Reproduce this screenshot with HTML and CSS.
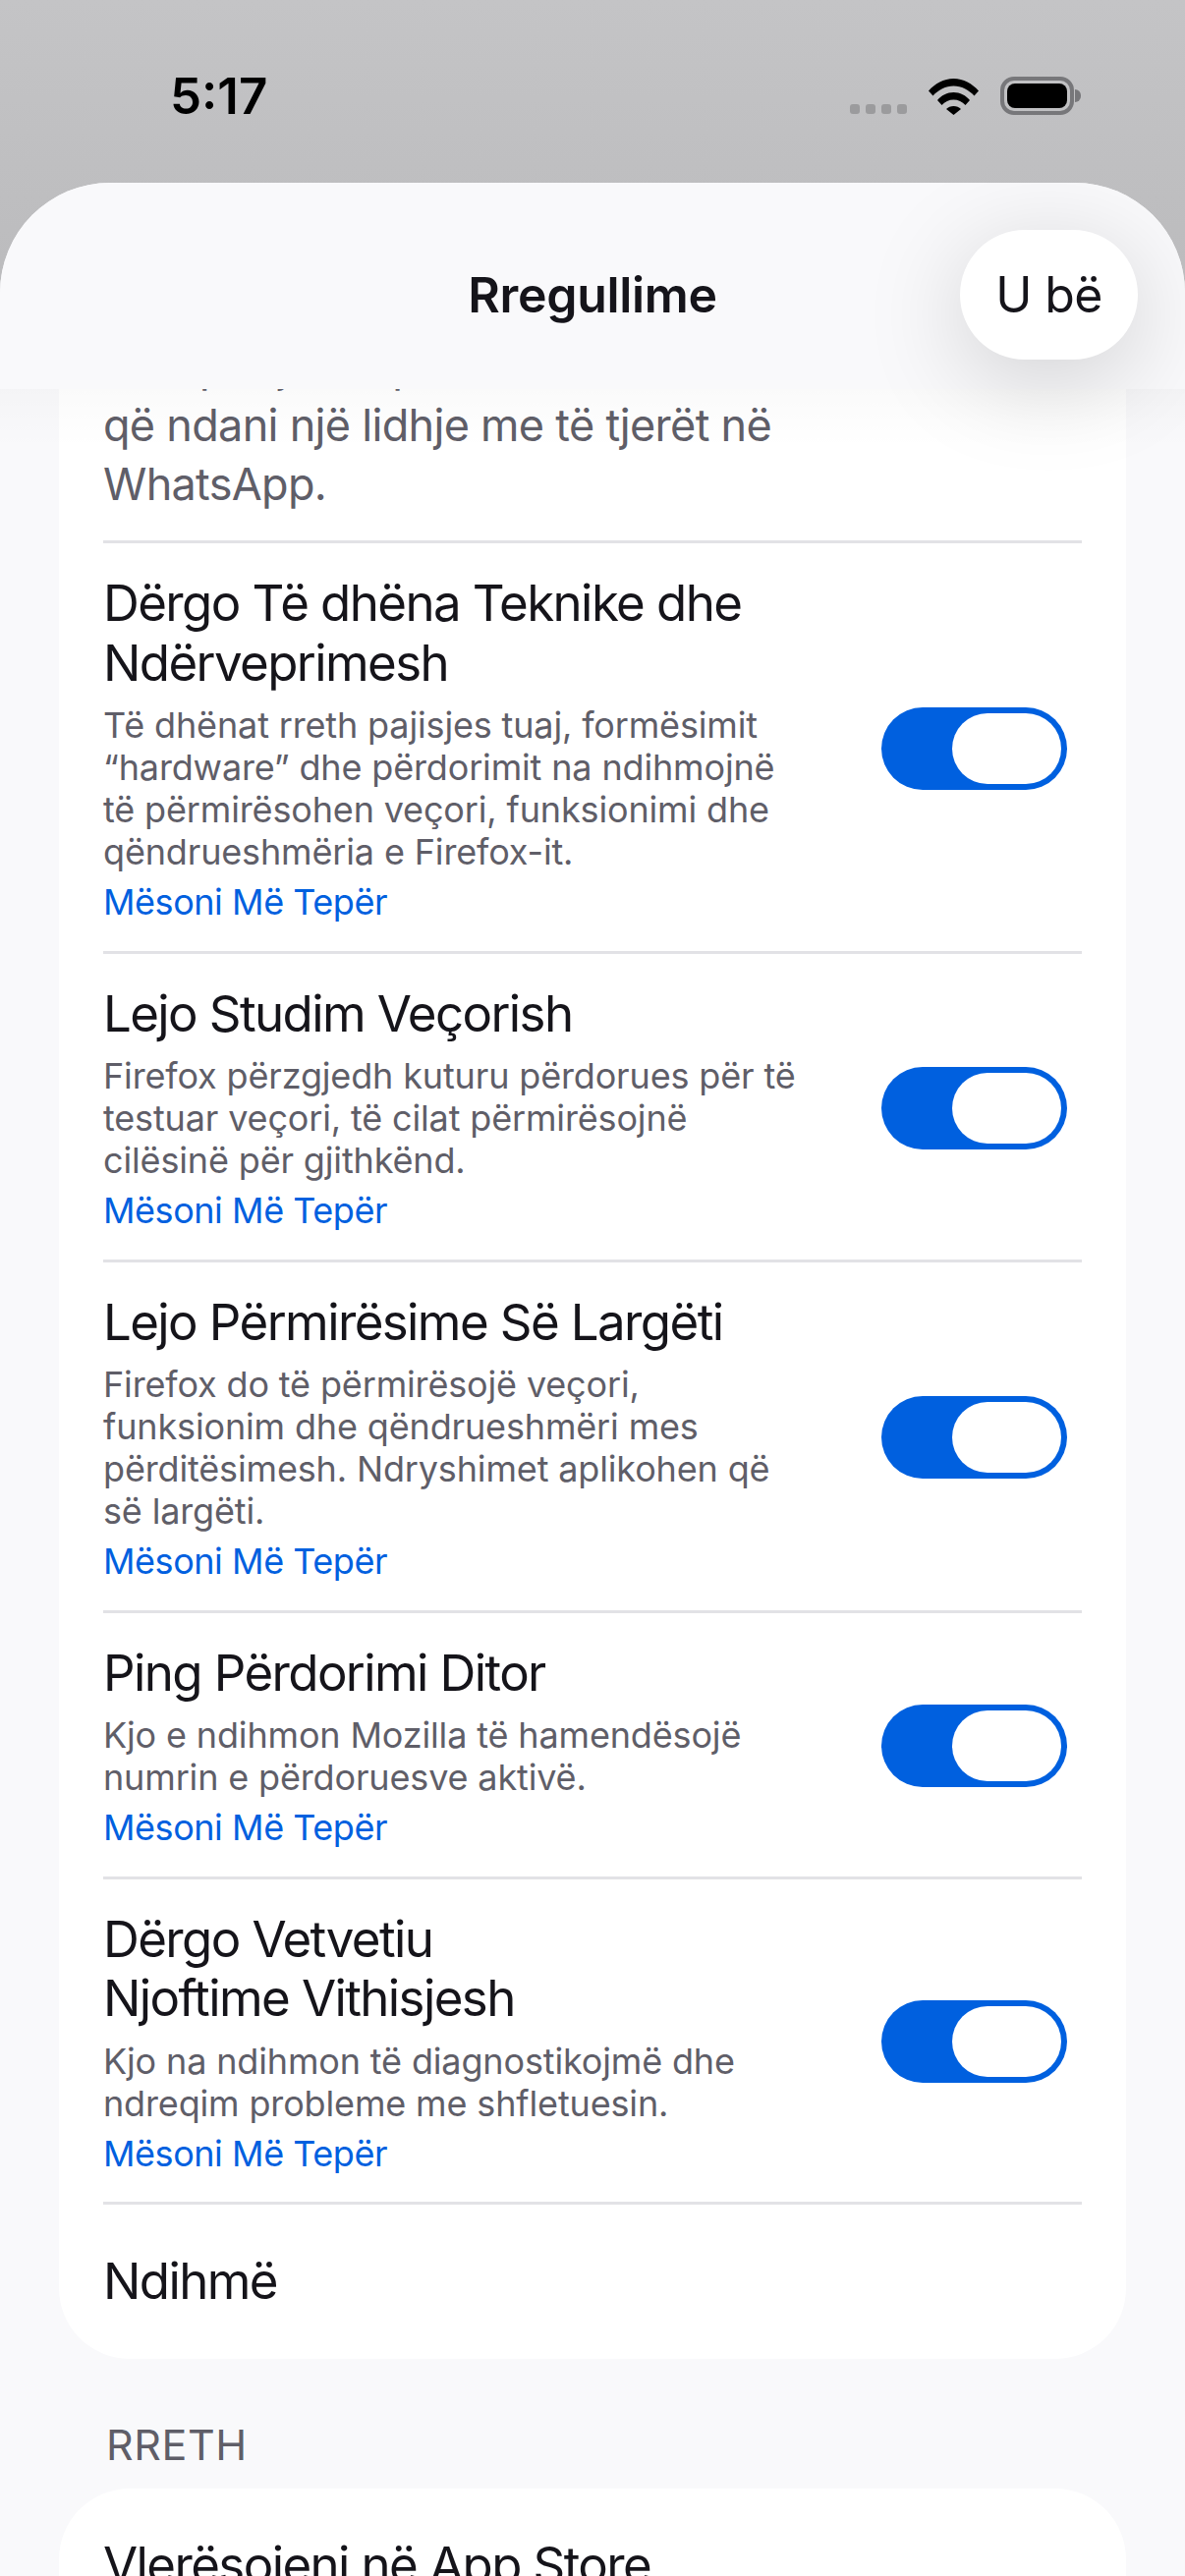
FILE: index.html
```html
<!DOCTYPE html>
<html lang="en">
<head>
    <meta charset="UTF-8">
    <meta name="viewport" content="width=device-width, initial-scale=1.0">
    <title>Rregullime</title>
    <link rel="stylesheet" href="styles.css">
</head>
<body>
    <div class="status-bar">
        <span class="time">5:17</span>
        <div class="status-icons">
            <div class="signal"><i></i><i></i><i></i><i></i></div>
            <svg class="wifi" width="51" height="37" viewBox="0 0 51 37">
                <path d="M0 12.5C6.500 5 15.500 0 25.500 0S44.500 5 51 12.500L46.500 17.500C41 11.500 33.500 7.500 25.500 7.500S10 11.500 4.500 17.500Z"/>
                <path d="M9 22C13 17 19 14 25.500 14S38 17 42 22L37.500 27C34.500 23.500 30 21.500 25.500 21.500S16.500 23.500 13.500 27Z"/>
                <path d="M18 31C20 29 22.500 28 25.500 28S31 29 33 31L25.500 37Z"/>
            </svg>
            <div class="battery"><div class="battery-fill"></div></div>
        </div>
    </div>
    <div class="sheet">
        <header class="sheet-header">
            <h1>Rregullime</h1>
            <button class="done-btn">U bë</button>
        </header>
        <div class="header-fade"></div>
        <div class="scroll-area">
            <div class="card first-card">
                <div class="row intro-row">
                    <p class="intro-text">Tani për ju të qartë<br>që ndani një lidhje me të tjerët në<br>WhatsApp.</p>
                </div>
                <div class="row">
                    <div class="row-text">
                        <div class="row-title">Dërgo Të dhëna Teknike dhe<br>Ndërveprimesh</div>
                        <p class="row-desc">Të dhënat rreth pajisjes tuaj, formësimit<br>“hardware” dhe përdorimit na ndihmojnë<br>të përmirësohen veçori, funksionimi dhe<br>qëndrueshmëria e Firefox-it.</p>
                        <a class="row-link">Mësoni Më Tepër</a>
                    </div>
                    <div class="toggle"><div class="knob"></div></div>
                </div>
                <div class="row">
                    <div class="row-text">
                        <div class="row-title">Lejo Studim Veçorish</div>
                        <p class="row-desc">Firefox përzgjedh kuturu përdorues për të<br>testuar veçori, të cilat përmirësojnë<br>cilësinë për gjithkënd.</p>
                        <a class="row-link">Mësoni Më Tepër</a>
                    </div>
                    <div class="toggle"><div class="knob"></div></div>
                </div>
                <div class="row">
                    <div class="row-text">
                        <div class="row-title">Lejo Përmirësime Së Largëti</div>
                        <p class="row-desc">Firefox do të përmirësojë veçori,<br>funksionim dhe qëndrueshmëri mes<br>përditësimesh. Ndryshimet aplikohen që<br>së largëti.</p>
                        <a class="row-link">Mësoni Më Tepër</a>
                    </div>
                    <div class="toggle"><div class="knob"></div></div>
                </div>
                <div class="row">
                    <div class="row-text">
                        <div class="row-title">Ping Përdorimi Ditor</div>
                        <p class="row-desc">Kjo e ndihmon Mozilla të hamendësojë<br>numrin e përdoruesve aktivë.</p>
                        <a class="row-link">Mësoni Më Tepër</a>
                    </div>
                    <div class="toggle"><div class="knob"></div></div>
                </div>
                <div class="row">
                    <div class="row-text">
                        <div class="row-title">Dërgo Vetvetiu<br>Njoftime Vithisjesh</div>
                        <p class="row-desc">Kjo na ndihmon të diagnostikojmë dhe<br>ndreqim probleme me shfletuesin.</p>
                        <a class="row-link">Mësoni Më Tepër</a>
                    </div>
                    <div class="toggle"><div class="knob"></div></div>
                </div>
                <div class="row plain-row">
                    <div class="row-title">Ndihmë</div>
                </div>
            </div>
            <div class="section-label">RRETH</div>
            <div class="card">
                <div class="row plain-row">
                    <div class="row-title">Vlerësojeni në App Store</div>
                </div>
            </div>
        </div>
    </div>
</body>
</html>
```

FILE: styles.css
```css
* {
    box-sizing: border-box;
}
html, body {
    margin: 0;
    padding: 0;
    height: 2622px;
    overflow: hidden;
}
body {
    font-family: Inter, "Liberation Sans", sans-serif;
    background: linear-gradient(#c4c4c6, #bbbbbd 300px);
    color: #15141a;
    display: flex;
    flex-direction: column;
}

/* status bar */
.status-bar {
    height: 186px;
    flex: none;
    display: flex;
    justify-content: space-between;
    align-items: flex-start;
    padding: 73px 113px 0 173px;
}
.time {
    font-size: 51px;
    line-height: 50px;
    font-weight: 600;
    color: #000;
}
.status-icons {
    display: flex;
    align-items: flex-end;
    gap: 22px;
    padding-top: 5px;
}
.signal {
    display: flex;
    gap: 6px;
    padding-bottom: 1px;
}
.signal i {
    display: block;
    width: 10px;
    height: 10px;
    border-radius: 3px;
    background: #9b9b9d;
}
.battery {
    width: 75px;
    height: 39px;
    border: 4px solid #77777a;
    border-radius: 14px;
    padding: 3px;
    position: relative;
}
.battery::after {
    content: "";
    position: absolute;
    right: -11px;
    top: 9px;
    width: 6px;
    height: 13px;
    background: #77777a;
    border-radius: 0 6px 6px 0;
}
.battery-fill {
    height: 100%;
    background: #000;
    border-radius: 8px;
}

/* sheet */
.sheet {
    flex: 1;
    min-height: 0;
    background: #f9f9fb;
    border-radius: 112px 112px 0 0;
    overflow: hidden;
    position: relative;
}
.sheet-header {
    position: absolute;
    top: 0;
    left: 0;
    right: 0;
    height: 210px;
    background: #f9f9fb;
    z-index: 2;
    display: flex;
    justify-content: center;
    align-items: center;
}
.header-fade {
    position: absolute;
    top: 210px;
    left: 0;
    right: 0;
    height: 60px;
    background: linear-gradient(rgba(0, 0, 0, 0.02), rgba(0, 0, 0, 0));
    z-index: 1;
}
.sheet-header h1 {
    margin: 0;
    font-size: 50px;
    font-weight: 600;
    letter-spacing: -0.3px;
    padding-top: 18px;
}
.done-btn {
    position: absolute;
    top: 48px;
    right: 48px;
    width: 181px;
    height: 132px;
    border: none;
    border-radius: 66px;
    background: #fff;
    color: #15141a;
    font-family: inherit;
    font-size: 50px;
    letter-spacing: -0.6px;
    box-shadow: 0 20px 100px rgba(0, 0, 0, 0.17);
}
.scroll-area {
    padding: 150px 60px 0;
}

/* cards */
.card {
    background: #fff;
    border-radius: 72px;
    padding: 0 45px;
}
.first-card {
    border-radius: 0 0 72px 72px;
}
.row {
    display: flex;
    justify-content: space-between;
    align-items: center;
    border-bottom: 3px solid #e2e2e6;
    padding-right: 15px;
}
.row:last-child {
    border-bottom: none;
}
.intro-row {
    height: 217px;
    align-items: flex-end;
    padding-bottom: 27px;
}
.intro-text {
    margin: 0;
    font-size: 45px;
    line-height: 60px;
    letter-spacing: -0.7px;
    color: #5f5e68;
}
.row-text {
    padding: 31px 0 27.5px;
}
.row-title {
    font-size: 51px;
    line-height: 60.5px;
    letter-spacing: -1.6px;
    color: #15141a;
}
.row-desc {
    margin: 12px 0 0;
    font-size: 36px;
    line-height: 43px;
    letter-spacing: -0.15px;
    color: #5f5e68;
}
.row-link {
    display: block;
    margin-top: 8px;
    font-size: 36px;
    line-height: 43px;
    letter-spacing: -0.45px;
    color: #0060df;
}
.plain-row {
    height: 157px;
}
.toggle {
    width: 189px;
    height: 84px;
    flex: none;
    margin-top: 3px;
    background: #0060df;
    border-radius: 42px;
    padding: 6px;
    display: flex;
    justify-content: flex-end;
}
.knob {
    width: 111px;
    height: 72px;
    background: #fff;
    border-radius: 36px;
}
.section-label {
    padding: 62px 0 0 48px;
    height: 132px;
    font-size: 43px;
    line-height: 50px;
    letter-spacing: 0.6px;
    color: #5f5e68;
}
```
